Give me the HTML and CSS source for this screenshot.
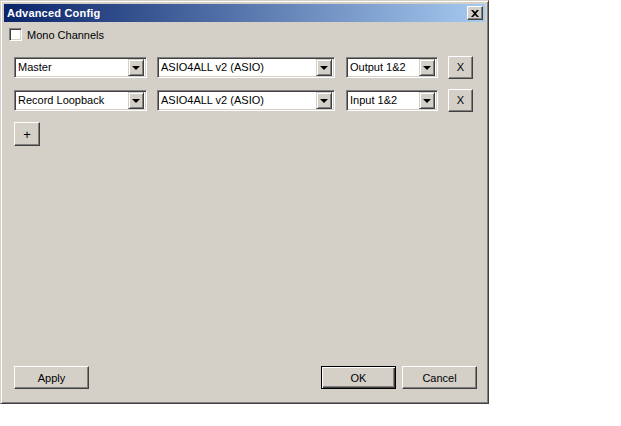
FILE: index.html
```html
<!DOCTYPE html>
<html lang="en">
<head>
  <meta charset="UTF-8">
  <title>Advanced Config</title>
  <link rel="stylesheet" href="styles.css">
</head>
<body>
  <div class="window">
    <div class="titlebar">
      <span class="title">Advanced Config</span>
      <button class="close-btn">
        <svg width="8" height="7" viewBox="0 0 8 7"><path d="M0 0h2l2 2 2-2h2L5 3.5 8 7H6L4 5 2 7H0l3-3.5z" fill="#000"/></svg>
      </button>
    </div>

    <div class="content">
      <label class="check-row">
        <span class="checkbox"></span>
        Mono Channels
      </label>

      <div class="channel-list">
        <div class="channel-row">
          <div class="combo combo-name"><span>Master</span><span class="drop"></span></div>
          <div class="combo combo-device"><span>ASIO4ALL v2 (ASIO)</span><span class="drop"></span></div>
          <div class="combo combo-port"><span>Output 1&amp;2</span><span class="drop"></span></div>
          <button class="btn btn-x">X</button>
        </div>
        <div class="channel-row">
          <div class="combo combo-name"><span>Record Loopback</span><span class="drop"></span></div>
          <div class="combo combo-device"><span>ASIO4ALL v2 (ASIO)</span><span class="drop"></span></div>
          <div class="combo combo-port"><span>Input 1&amp;2</span><span class="drop"></span></div>
          <button class="btn btn-x">X</button>
        </div>
      </div>

      <button class="btn btn-add">+</button>

      <div class="footer">
        <button class="btn btn-wide">Apply</button>
        <div class="footer-right">
          <button class="btn btn-wide btn-default">OK</button>
          <button class="btn btn-wide">Cancel</button>
        </div>
      </div>
    </div>
  </div>
</body>
</html>
```

FILE: styles.css
```css
:root {
  --face: #d4d0c8;
  --shadow: #808080;
  --dark: #404040;
  --light: #ffffff;
}

* {
  box-sizing: border-box;
}

body {
  margin: 0;
  background: #ffffff;
  font-family: "Liberation Sans", Arial, sans-serif;
  font-size: 11px;
  color: #000;
}

.window {
  width: 489px;
  height: 404px;
  background: var(--face);
  border: 1px solid;
  border-color: var(--face) var(--dark) var(--dark) var(--face);
  box-shadow: inset 1px 1px var(--light), inset -1px -1px var(--shadow);
  padding: 3px;
  display: flex;
  flex-direction: column;
}

.titlebar {
  height: 18px;
  background: linear-gradient(to right, #0a246a, #a6caf0);
  display: flex;
  align-items: center;
  justify-content: space-between;
  padding: 0 2px 0 3px;
  color: #fff;
}

.title {
  font-weight: bold;
  font-size: 11px;
  letter-spacing: 0.2px;
}

.close-btn {
  width: 16px;
  height: 14px;
  padding: 0;
  background: var(--face);
  border: 1px solid;
  border-color: var(--light) var(--dark) var(--dark) var(--light);
  box-shadow: inset -1px -1px var(--shadow);
  display: flex;
  align-items: center;
  justify-content: center;
}

.content {
  flex: 1;
  display: flex;
  flex-direction: column;
  padding: 6px 0 11px 5px;
}

.check-row {
  display: flex;
  align-items: center;
  gap: 5px;
  height: 13px;
}

.checkbox {
  width: 13px;
  height: 13px;
  background: #fff;
  border: 1px solid;
  border-color: var(--shadow) var(--light) var(--light) var(--shadow);
  box-shadow: inset 1px 1px var(--dark), inset -1px -1px var(--face);
}

.channel-list {
  display: flex;
  flex-direction: column;
  gap: 11px;
  margin: 15px 0 0 5px;
}

.channel-row {
  display: flex;
  align-items: center;
  height: 22px;
}

.combo {
  height: 21px;
  background: #fff;
  border: 1px solid;
  border-color: var(--shadow) var(--light) var(--light) var(--shadow);
  box-shadow: inset 1px 1px var(--dark), inset -1px -1px var(--face);
  display: flex;
  align-items: center;
  justify-content: space-between;
  padding: 2px 2px 2px 3px;
}

.combo-name {
  width: 133px;
}

.combo-device {
  width: 178px;
  margin-left: 10px;
}

.combo-port {
  width: 92px;
  margin-left: 11px;
}

.drop {
  width: 16px;
  height: 17px;
  background: var(--face);
  border: 1px solid;
  border-color: var(--face) var(--dark) var(--dark) var(--face);
  box-shadow: inset 1px 1px var(--light), inset -1px -1px var(--shadow);
  position: relative;
}

.drop::after {
  content: "";
  position: absolute;
  left: 3px;
  top: 6px;
  border-left: 4px solid transparent;
  border-right: 4px solid transparent;
  border-top: 4px solid #000;
}

.btn {
  font-family: inherit;
  font-size: 11px;
  color: #000;
  background: var(--face);
  border: 1px solid;
  border-color: var(--light) var(--dark) var(--dark) var(--light);
  box-shadow: inset -1px -1px var(--shadow);
  padding: 0;
}

.btn-x {
  width: 25px;
  height: 23px;
  margin-left: 10px;
}

.btn-add {
  width: 26px;
  height: 24px;
  margin: 11px 0 0 5px;
  font-size: 13px;
}

.footer {
  margin-top: auto;
  display: flex;
  justify-content: space-between;
  padding: 0 8px 0 5px;
}

.footer-right {
  display: flex;
  gap: 6px;
}

.btn-wide {
  width: 75px;
  height: 23px;
}

.btn-default {
  border: 1px solid #000;
  box-shadow: inset 1px 1px var(--light), inset -1px -1px var(--dark), inset -2px -2px var(--shadow);
}
```
